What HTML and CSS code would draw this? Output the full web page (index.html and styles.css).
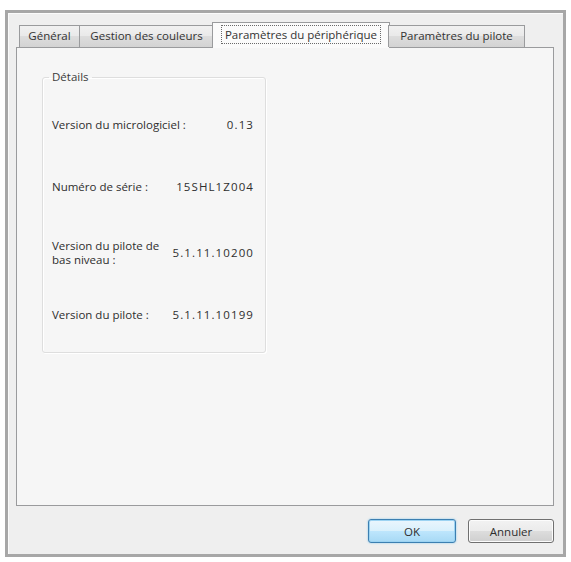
FILE: index.html
```html
<!DOCTYPE html>
<html lang="fr">
<head>
<meta charset="utf-8">
<title>Paramètres du périphérique</title>
<link rel="stylesheet" href="styles.css">
</head>
<body>
<div class="window">
  <div class="tabs">
    <div class="tab tab-general">Général</div>
    <div class="tab tab-couleurs">Gestion des couleurs</div>
    <div class="tab tab-active"><span class="focus">Paramètres du périphérique</span></div>
    <div class="tab tab-pilote">Paramètres du pilote</div>
  </div>
  <div class="panel">
    <fieldset class="group">
      <legend>Détails</legend>
      <div class="row row-1"><span class="label">Version du micrologiciel :</span><span class="value">0.13</span></div>
      <div class="row row-2"><span class="label">Numéro de série :</span><span class="value">15SHL1Z004</span></div>
      <div class="row row-3"><span class="label label-wrap">Version du pilote de bas niveau :</span><span class="value">5.1.11.10200</span></div>
      <div class="row row-4"><span class="label">Version du pilote :</span><span class="value">5.1.11.10199</span></div>
    </fieldset>
  </div>
  <div class="buttons">
    <button class="btn btn-default btn-ok">OK</button>
    <button class="btn btn-cancel">Annuler</button>
  </div>
</div>
</body>
</html>
```

FILE: styles.css
```css
html, body {
  margin: 0;
  padding: 0;
  background: #ffffff;
}

body {
  font-family: "Open Sans", "Liberation Sans", sans-serif;
  font-size: 11.5px;
  color: #2e2e2e;
}

.window {
  box-sizing: border-box;
  margin: 10px 0 0 5px;
  width: 561px;
  height: 547px;
  border: 3px solid #a7a7a7;
  box-shadow: inset 1px 1px 0 #fbfbfb;
  background: #efefef;
  padding: 9px 9px 11px 8px;
  display: flex;
  flex-direction: column;
}

/* Tabs */
.tabs {
  display: flex;
  align-items: flex-end;
  height: 25px;
  padding-left: 3px;
  position: relative;
  z-index: 1;
}

.tab {
  box-sizing: border-box;
  height: 22px;
  border: 1px solid #9a9b9d;
  border-bottom: none;
  background: linear-gradient(#f1f1f1, #e9e9e9 50%, #dddddd 50%, #d3d3d3);
  line-height: 20px;
  text-align: center;
  color: #333;
  white-space: nowrap;
}

.tab-general { width: 61px; }
.tab-couleurs { width: 135px; margin-left: -1px; }
.tab-pilote { width: 137px; margin-left: -2px; }

.tab-active {
  height: 26px;
  width: 178px;
  margin-left: -2px;
  margin-bottom: -1px;
  background: #fbfbfb;
  padding-top: 3px;
  line-height: 18px;
}

.focus {
  display: inline-block;
  outline: 1px dotted #6a6a6a;
  padding: 0 3px;
  line-height: 17px;
}

/* Panel */
.panel {
  box-sizing: border-box;
  height: 459px;
  border: 1px solid #9a9b9d;
  background: #f6f6f6;
  padding: 22px 0 0 25px;
}

.group {
  box-sizing: border-box;
  width: 224px;
  height: 283px;
  margin: 0;
  padding: 0 11px 0 9px;
  border: 1px solid #dedede;
  border-radius: 3px;
  box-shadow: inset 1px 1px 0 #ffffff, 1px 1px 0 #ffffff;
}

.group legend {
  margin-left: -3px;
  padding: 0 3px;
  line-height: 14px;
  color: #3a3a3a;
}

.row {
  display: flex;
  align-items: center;
  justify-content: space-between;
  line-height: 14px;
}

.row-1 { height: 62px; margin-top: 10px; }
.row-2 { height: 62px; }
.row-3 { height: 70px; }
.row-4 { height: 54px; }

.label {
  white-space: nowrap;
}

.label-wrap {
  white-space: normal;
  width: 118px;
}

.value {
  letter-spacing: 1.1px;
  white-space: nowrap;
}

/* Buttons */
.buttons {
  display: flex;
  justify-content: flex-end;
  gap: 12px;
  margin-top: 13px;
}

.btn {
  box-sizing: border-box;
  height: 24px;
  font-family: inherit;
  font-size: 11.5px;
  color: #2e2e2e;
  border-radius: 3px;
  padding: 0;
}

.btn-ok { width: 88px; }
.btn-cancel { width: 86px; }

.btn-default {
  border: 1px solid #3c7fb1;
  background: linear-gradient(#eaf6fd, #d9f0fc 50%, #bee6fd 50%, #a7d9f5);
  box-shadow: inset 0 0 0 1px #9cd3f2, 0 0 2px #7ec4ea;
}

.btn-cancel {
  border: 1px solid #707070;
  background: linear-gradient(#f2f2f2, #ebebeb 50%, #dddddd 50%, #cfcfcf);
  box-shadow: inset 0 0 0 1px #fcfcfc;
}
```
